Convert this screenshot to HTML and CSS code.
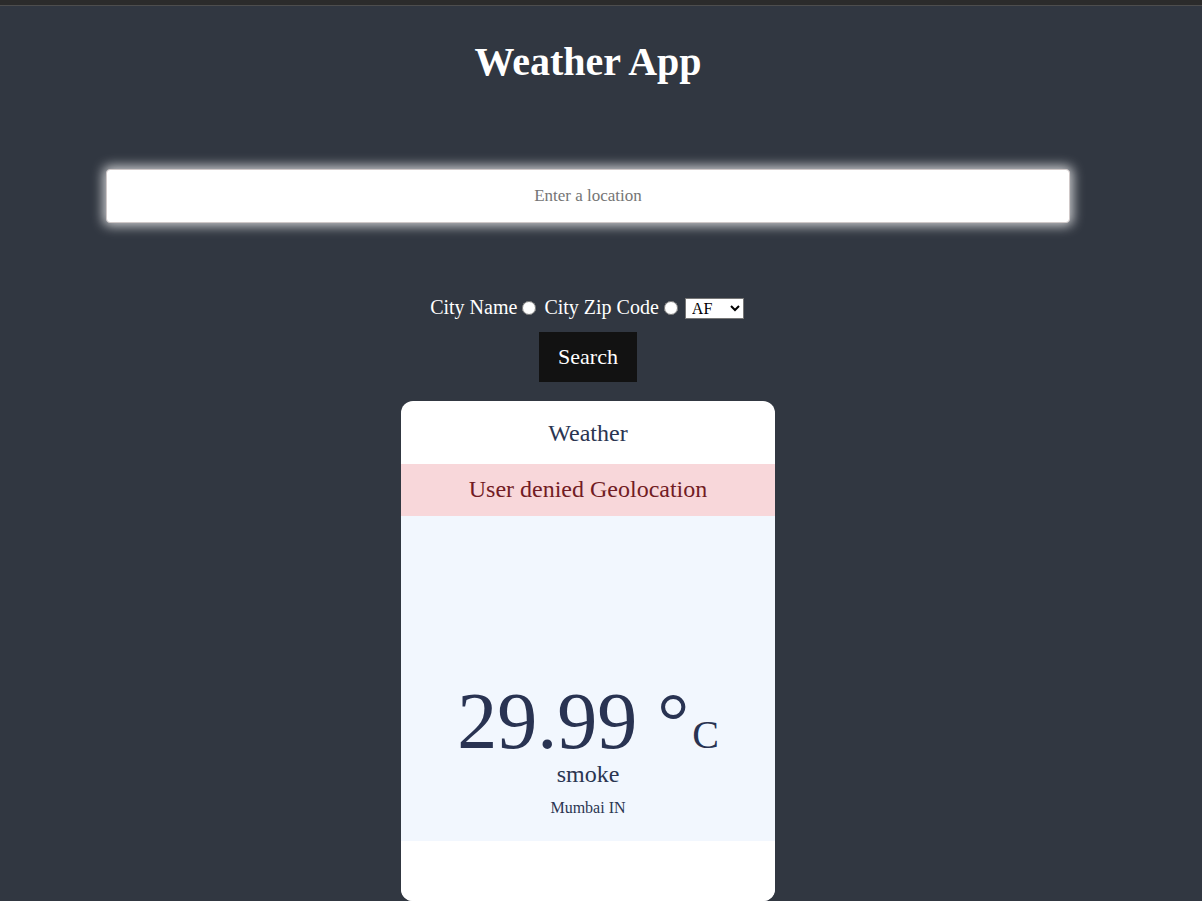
FILE: index.html
```html
<!DOCTYPE html>
<html lang="en">
<head>
<meta charset="utf-8">
<title>Weather App</title>
<link rel="stylesheet" href="styles.css">
</head>
<body>
<div class="chrome"></div>
<div class="page">
  <h1 class="title">Weather App</h1>
  <input class="location" type="text" placeholder="Enter a location">
  <div class="options">City Name<input class="radio" type="radio" name="mode"> City Zip Code<input class="radio" type="radio" name="mode"><select class="country"><option>AF</option></select></div>
  <div class="actions"><button class="search">Search</button></div>
  <div class="card">
    <div class="card-head">Weather</div>
    <div class="card-error">User denied Geolocation</div>
    <div class="card-body">
      <div class="temp">29.99 °<span class="unit">C</span></div>
      <div class="desc">smoke</div>
      <div class="place">Mumbai IN</div>
    </div>
    <div class="card-foot"></div>
  </div>
</div>
</body>
</html>
```
FILE: styles.css
```css
html, body {
  margin: 0;
  padding: 0;
  background: #313741;
  height: 100%;
  overflow: hidden;
}
body {
  font-family: "Liberation Serif", "Times New Roman", serif;
  color: #fff;
}
.chrome {
  height: 5px;
  background: #2b2b2b;
  border-bottom: 1px solid #4d4d4d;
}
.page {
  width: 1176px;
  display: flex;
  flex-direction: column;
  align-items: center;
}
.title {
  margin: 0;
  padding-top: 36px;
  font-size: 40px;
  line-height: 40px;
  font-weight: bold;
  color: #fff;
}
.location {
  box-sizing: border-box;
  margin-top: 87px;
  width: 964px;
  height: 54px;
  border: 1px solid #cfc8c8;
  border-radius: 4px;
  background: #fff;
  box-shadow: 0 0 12px 3px rgba(255, 255, 255, 0.75);
  font-family: "Liberation Serif", "Times New Roman", serif;
  font-size: 17px;
  text-align: center;
  outline: none;
}
.location::placeholder {
  color: #757575;
}
.options {
  margin-top: 72px;
  margin-left: -2px;
  font-size: 20px;
  line-height: 24px;
  color: #fff;
}
.radio {
  width: 14px;
  height: 14px;
  margin: 3px 3px 0 5px;
  vertical-align: -1px;
}
.country {
  width: 59px;
  height: 21px;
  margin-left: 4px;
  font-family: "Liberation Serif", "Times New Roman", serif;
  font-size: 16px;
  background: #fff;
  color: #000;
  border: 1px solid #767676;
  border-radius: 0;
  padding: 0 2px;
}
.actions {
  margin-top: 13px;
}
.search {
  display: block;
  padding: 12px 19px;
  border: none;
  background: #121212;
  color: #fff;
  font-family: "Liberation Serif", "Times New Roman", serif;
  font-size: 22px;
  line-height: 26px;
}
.card {
  margin-top: 19px;
  width: 374px;
  background: #fff;
  border-radius: 12px;
  overflow: hidden;
  text-align: center;
  color: #2b3551;
}
.card-head {
  box-sizing: border-box;
  height: 63px;
  padding-top: 20px;
  font-size: 24px;
  line-height: 24px;
}
.card-error {
  box-sizing: border-box;
  height: 52px;
  padding-top: 13px;
  font-size: 24px;
  line-height: 24px;
  background: #f8d7da;
  color: #721c24;
}
.card-body {
  box-sizing: border-box;
  height: 325px;
  padding-top: 165px;
  background: #f2f7fe;
}
.temp {
  font-size: 80px;
  line-height: 80px;
  color: #293352;
}
.unit {
  font-size: 40px;
  line-height: 40px;
  margin-left: 3px;
}
.desc {
  font-size: 24px;
  line-height: 26px;
  margin-top: 0;
}
.place {
  margin-top: 11px;
  font-size: 16px;
  line-height: 19px;
}
.card-foot {
  height: 60px;
  background: #fff;
}
```
